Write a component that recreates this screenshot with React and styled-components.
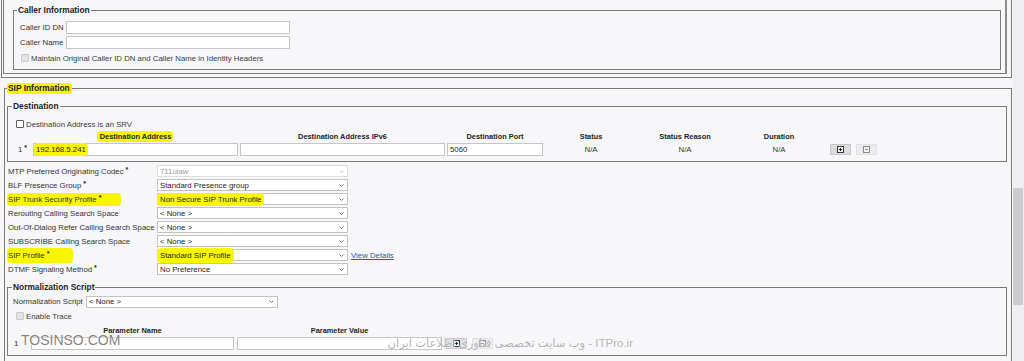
import React from "react";
import styled, { createGlobalStyle } from "styled-components";

const FONT = `"Liberation Sans", Arial, "DejaVu Sans", sans-serif`;

const GlobalStyle = createGlobalStyle`
  html, body { margin: 0; padding: 0; background: #f7f7f9; overflow: hidden; }
  body { font-family: ${FONT}; font-size: 7.8px; color: #333; }
`;

const Page = styled.div`
  position: relative;
  display: flex;
  width: 1024px;
  height: 361px;
  overflow: hidden;
  background: #f7f7f9;
`;

const Main = styled.main`
  flex: none;
  width: 1013px;
  height: 361px;
  overflow: hidden;
`;

const ScrollRail = styled.div`
  flex: 1;
  background: #efeff1;
  padding: 188px 1px 0 0;
`;

const ScrollThumb = styled.div`
  height: 117px;
  background: #cdcdcf;
`;

const OuterFrame = styled.div`
  box-sizing: border-box;
  width: 1011px;
  margin-left: 1px;
  border: 1px solid #7a7a7a;
  border-top: none;
  padding: 0 4px 3px 1px;
`;

const InnerFrame = styled.div`
  border: 1px solid #7a7a7a;
  border-right: 2px solid #8a8a8a;
  border-top: none;
  padding: 5px 4px 3px 9px;
`;

const CallerGroup = styled.fieldset`
  margin: 0;
  min-inline-size: 0;
  border: 1px solid #7a7a7a;
  padding: 5px 5px 5px 3px;
`;

const SipGroup = styled.fieldset`
  box-sizing: border-box;
  width: 1008px;
  margin: 5px 0 0 4px;
  min-inline-size: 0;
  border: 1px solid #7a7a7a;
  padding: 7px 4px 30px 2px;
`;

const SubGroup = styled.fieldset`
  margin: 0;
  min-inline-size: 0;
  border: 1px solid #7a7a7a;
  padding: ${({ $top }) => $top}px 0 ${({ $bottom }) => $bottom}px 4px;
`;

const Legend = styled.legend`
  padding: 0 1px;
  font: bold 8.4px/11px ${FONT};
  color: #222;
  white-space: nowrap;
`;

const MarkedLegend = styled(Legend)`
  padding: 0 2px 0 1px;
  background: #f9f600;
  border-radius: 3px;
`;

const Marker = styled.span`
  background: #f9f600;
  border-radius: 4px;
  padding: ${({ $v = 1 }) => $v}px ${({ $r = 2 }) => $r}px ${({ $v = 1 }) => $v}px ${({ $l = 1 }) => $l}px;
  margin: 0 ${({ $r = 2 }) => -$r}px 0 ${({ $l = 1 }) => -$l}px;
`;

const Req = styled.sup`
  font-size: 7px;
  font-weight: bold;
  line-height: 0;
  margin-left: 2px;
  vertical-align: 2px;
  color: #222;
`;

const CallerGrid = styled.div`
  display: grid;
  grid-template-columns: 47px 224px;
  row-gap: 2px;
  align-items: center;
  padding-left: 2px;
`;

const TextBox = styled.div`
  box-sizing: border-box;
  height: 13px;
  background: #fff;
  border: 1px solid #c6c6c8;
  padding: 0 2px;
  line-height: 11px;
  color: #222;
  white-space: nowrap;
`;

const CheckRow = styled.div`
  display: flex;
  align-items: center;
  gap: 2px;
  height: 12px;
  margin-top: ${({ $gap = 0 }) => $gap}px;
  padding-left: ${({ $indent }) => $indent}px;
  color: #3a3a3a;
  white-space: nowrap;
`;

const Box = styled.span`
  box-sizing: border-box;
  width: 8px;
  height: 8px;
  border-radius: 1px;
  border: 1px solid ${({ $disabled }) => ($disabled ? "#c8c8ca" : "#5c5c5c")};
  background: ${({ $disabled }) => ($disabled ? "#e3e3e5" : "#fff")};
`;

const DestGrid = styled.div`
  display: grid;
  grid-template-columns: 15px 205px 205px 96px 92px 92px 92px auto;
  grid-template-rows: 11px 13px;
  column-gap: 2px;
  row-gap: 1px;
  margin-top: 1px;
  padding-left: 4px;
  align-items: center;
`;

const ParamGrid = styled.div`
  display: grid;
  grid-template-columns: 16px 203px 205px auto;
  grid-template-rows: 11px 13px;
  column-gap: 3px;
  row-gap: 1px;
  margin-top: 3px;
  align-items: center;
`;

const HeadCell = styled.div`
  text-align: center;
  font: bold 7.4px/11px ${FONT};
  color: #222;
  white-space: nowrap;
`;

const ValueCell = styled.div`
  text-align: center;
  color: #333;
`;

const RowIndex = styled.div`
  padding-left: 2px;
  color: #333;
  white-space: nowrap;
`;

const Buttons = styled.div`
  display: flex;
  gap: 5px;
  padding-left: ${({ $pad }) => $pad}px;
`;

const MiniButton = styled.div`
  box-sizing: border-box;
  width: 21px;
  height: 11px;
  display: flex;
  align-items: center;
  justify-content: center;
  background: ${({ $muted }) => ($muted ? "#ececee" : "#dcdcde")};
  border: 1px solid ${({ $muted }) => ($muted ? "#e2e2e4" : "#c8c8ca")};
`;

const SettingsList = styled.div`
  margin-top: 2px;
`;

const SettingRow = styled.div`
  display: grid;
  grid-template-columns: 150px 191px auto;
  align-items: center;
  height: 14px;
`;

const RowLabel = styled.div`
  padding-left: 1px;
  white-space: nowrap;
  color: #333;
`;

const Select = styled.div`
  box-sizing: border-box;
  height: 12px;
  display: flex;
  align-items: center;
  justify-content: space-between;
  padding: 0 3px 0 2px;
  background: #fff;
  border: 1px solid ${({ $disabled }) => ($disabled ? "#dcdcde" : "#c2c2c4")};
  color: ${({ $disabled }) => ($disabled ? "#9a9a9a" : "#222")};
  white-space: nowrap;
`;

const DetailsLink = styled.a`
  margin-left: 3px;
  color: #2a5db0;
  text-decoration: underline;
  white-space: nowrap;
`;

const ScriptRow = styled.div`
  display: grid;
  grid-template-columns: 74px 192px;
  align-items: center;
  height: 12px;
`;

const NormGroupSpacer = styled.div`
  height: 5.5px;
`;

const WatermarkLatin = styled.div`
  position: absolute;
  left: 21px;
  top: 331px;
  font: 14px/18px ${FONT};
  color: rgba(80, 80, 80, 0.72);
  text-shadow: 0 0 2px #fff, 0 0 1px #fff;
  white-space: nowrap;
`;

const WatermarkPersian = styled.div`
  position: absolute;
  left: 380px;
  top: 335px;
  width: 253px;
  direction: rtl;
  font: 11.5px/16px ${FONT};
  color: #b4b4b6;
  text-shadow: 0 0 2px #fff;
  white-space: nowrap;
`;

const Chevron = ({ muted }) => (
  <svg width="5" height="3" viewBox="0 0 5 3">
    <path d="M0.5 0.5 L2.5 2.5 L4.5 0.5" fill="none" stroke={muted ? "#bbb" : "#666"} strokeWidth="0.9" />
  </svg>
);

const BoxIcon = ({ plus, muted }) => (
  <svg width="7" height="7" viewBox="0 0 7 7">
    <rect x="0.5" y="0.5" width="6" height="6" fill="#f5f5f5" stroke={muted ? "#8c8c8c" : "#3a3a3a"} />
    <path d={plus ? "M2 3.5h3M3.5 2v3" : "M2 3.5h3"} stroke={muted ? "#8c8c8c" : "#222"} strokeWidth="1" />
  </svg>
);

const settings = [
  { label: "MTP Preferred Originating Codec", req: true, value: "711ulaw", disabled: true },
  { label: "BLF Presence Group", req: true, value: "Standard Presence group" },
  { label: "SIP Trunk Security Profile", req: true, value: "Non Secure SIP Trunk Profile", mark: { label: 20, value: 2 } },
  { label: "Rerouting Calling Search Space", value: "< None >" },
  { label: "Out-Of-Dialog Refer Calling Search Space", value: "< None >" },
  { label: "SUBSCRIBE Calling Search Space", value: "< None >" },
  { label: "SIP Profile", req: true, value: "Standard SIP Profile", mark: { label: 24, value: 3 }, link: true },
  { label: "DTMF Signaling Method", req: true, value: "No Preference" },
];

function SettingLine({ item }) {
  const labelContent = (
    <>
      {item.label}
      {item.req && <Req>*</Req>}
    </>
  );
  return (
    <SettingRow>
      <RowLabel>
        {item.mark ? (
          <Marker $r={item.mark.label} $v={item.mark.value} $l={1}>
            {labelContent}
          </Marker>
        ) : (
          labelContent
        )}
      </RowLabel>
      <Select $disabled={item.disabled}>
        <span>
          {item.mark ? (
            <Marker $l={3} $r={item.mark.label === 20 ? 2 : 3} $v={item.mark.value}>
              {item.value}
            </Marker>
          ) : (
            item.value
          )}
        </span>
        <Chevron muted={item.disabled} />
      </Select>
      {item.link ? <DetailsLink href="#">View Details</DetailsLink> : <span />}
    </SettingRow>
  );
}

export default function App() {
  return (
    <Page>
      <GlobalStyle />
      <Main>
        <OuterFrame>
          <InnerFrame>
            <CallerGroup>
              <Legend>Caller Information</Legend>
              <CallerGrid>
                <RowLabel as="span">Caller ID DN</RowLabel>
                <TextBox />
                <RowLabel as="span">Caller Name</RowLabel>
                <TextBox />
              </CallerGrid>
              <CheckRow $indent={4} $gap={3}>
                <Box $disabled />
                Maintain Original Caller ID DN and Caller Name in Identity Headers
              </CheckRow>
            </CallerGroup>
          </InnerFrame>
        </OuterFrame>

        <SipGroup>
          <MarkedLegend>SIP Information</MarkedLegend>
          <SubGroup $top={6} $bottom={5}>
            <Legend>Destination</Legend>
            <CheckRow $indent={4}>
              <Box />
              Destination Address is an SRV
            </CheckRow>
            <DestGrid>
              <span />
              <HeadCell>
                <Marker $l={3} $r={2} $v={1}>Destination Address</Marker>
              </HeadCell>
              <HeadCell>Destination Address IPv6</HeadCell>
              <HeadCell>Destination Port</HeadCell>
              <HeadCell>Status</HeadCell>
              <HeadCell>Status Reason</HeadCell>
              <HeadCell>Duration</HeadCell>
              <span />

              <RowIndex>
                1<Req>*</Req>
              </RowIndex>
              <TextBox>
                <Marker $l={2} $r={2} $v={2}>192.168.5.241</Marker>
              </TextBox>
              <TextBox />
              <TextBox>5060</TextBox>
              <ValueCell>N/A</ValueCell>
              <ValueCell>N/A</ValueCell>
              <ValueCell>N/A</ValueCell>
              <Buttons $pad={3}>
                <MiniButton>
                  <BoxIcon plus />
                </MiniButton>
                <MiniButton $muted>
                  <BoxIcon muted />
                </MiniButton>
              </Buttons>
            </DestGrid>
          </SubGroup>

          <SettingsList>
            {settings.map((s) => (
              <SettingLine key={s.label} item={s} />
            ))}
          </SettingsList>

          <NormGroupSpacer />
          <SubGroup $top={3} $bottom={5}>
            <Legend>Normalization Script</Legend>
            <ScriptRow>
              <RowLabel>Normalization Script</RowLabel>
              <Select>
                <span>&lt; None &gt;</span>
                <Chevron />
              </Select>
            </ScriptRow>
            <CheckRow $indent={4} $gap={2.5}>
              <Box $disabled />
              Enable Trace
            </CheckRow>
            <ParamGrid>
              <span />
              <HeadCell>Parameter Name</HeadCell>
              <HeadCell>Parameter Value</HeadCell>
              <span />
              <RowIndex>1</RowIndex>
              <TextBox />
              <TextBox />
              <Buttons $pad={1}>
                <MiniButton>
                  <BoxIcon plus />
                </MiniButton>
                <MiniButton $muted>
                  <BoxIcon muted />
                </MiniButton>
              </Buttons>
            </ParamGrid>
          </SubGroup>
        </SipGroup>
      </Main>
      <ScrollRail>
        <ScrollThumb />
      </ScrollRail>
      <WatermarkLatin>TOSINSO.COM</WatermarkLatin>
      <WatermarkPersian>ITPro.ir - وب سایت تخصصی فناوری اطلاعات ایران</WatermarkPersian>
    </Page>
  );
}
